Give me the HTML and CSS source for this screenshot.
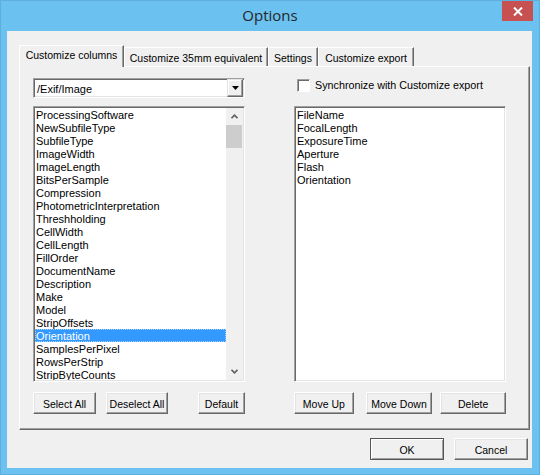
FILE: index.html
```html
<!DOCTYPE html>
<html lang="en">
<head>
  <meta charset="UTF-8">
  <title>Options</title>
  <link rel="stylesheet" href="styles.css">
</head>
<body>

  <div class="window">
    <!-- Title bar -->
    <div class="titlebar">
      <span></span>
      <span class="title">Options</span>
      <button class="close-btn">
        <svg width="10" height="9" viewBox="0 0 10 9"><path d="M1 0.5 L9 8.5 M9 0.5 L1 8.5" stroke="#fff" stroke-width="2"/></svg>
      </button>
    </div>

    <div class="client">
      <!-- Tabs -->
      <div class="tabs">
        <div class="tab active tab-columns">Customize columns</div>
        <div class="tab tab-35mm">Customize 35mm equivalent</div>
        <div class="tab tab-settings">Settings</div>
        <div class="tab tab-export">Customize export</div>
      </div>

      <div class="panel">
        <!-- Left: available tags -->
        <div class="col">
          <div class="combo">
            <span class="combo-text">/Exif/Image</span>
            <span class="combo-btn">
              <svg width="7" height="4" viewBox="0 0 7 4"><path d="M0 0 H7 L3.5 4 Z" fill="#000"/></svg>
            </span>
          </div>

          <div class="listbox">
            <div class="items">
              <div class="item">ProcessingSoftware</div>
              <div class="item">NewSubfileType</div>
              <div class="item">SubfileType</div>
              <div class="item">ImageWidth</div>
              <div class="item">ImageLength</div>
              <div class="item">BitsPerSample</div>
              <div class="item">Compression</div>
              <div class="item">PhotometricInterpretation</div>
              <div class="item">Threshholding</div>
              <div class="item">CellWidth</div>
              <div class="item">CellLength</div>
              <div class="item">FillOrder</div>
              <div class="item">DocumentName</div>
              <div class="item">Description</div>
              <div class="item">Make</div>
              <div class="item">Model</div>
              <div class="item">StripOffsets</div>
              <div class="item selected">Orientation</div>
              <div class="item">SamplesPerPixel</div>
              <div class="item">RowsPerStrip</div>
              <div class="item">StripByteCounts</div>
            </div>
            <div class="scrollbar">
              <span class="arrow">
                <svg width="7" height="5" viewBox="0 0 7 5"><path d="M0.5 4.2 L3.5 1.2 L6.5 4.2" fill="none" stroke="#606060" stroke-width="1.6"/></svg>
              </span>
              <span class="thumb"></span>
              <span class="track"></span>
              <span class="arrow">
                <svg width="7" height="5" viewBox="0 0 7 5"><path d="M0.5 0.8 L3.5 3.8 L6.5 0.8" fill="none" stroke="#606060" stroke-width="1.6"/></svg>
              </span>
            </div>
          </div>

          <div class="btn-row">
            <button class="btn w-select">Select All</button>
            <button class="btn w-deselect">Deselect All</button>
            <button class="btn w-default push">Default</button>
          </div>
        </div>

        <!-- Right: chosen columns -->
        <div class="col">
          <label class="check-row">
            <span class="checkbox"></span>
            Synchronize with Customize export
          </label>

          <div class="listbox">
            <div class="items">
              <div class="item">FileName</div>
              <div class="item">FocalLength</div>
              <div class="item">ExposureTime</div>
              <div class="item">Aperture</div>
              <div class="item">Flash</div>
              <div class="item">Orientation</div>
            </div>
          </div>

          <div class="btn-row">
            <button class="btn w-up">Move Up</button>
            <button class="btn w-down">Move Down</button>
            <button class="btn w-delete">Delete</button>
          </div>
        </div>
      </div>

      <div class="footer">
        <button class="btn w-ok default">OK</button>
        <button class="btn w-cancel">Cancel</button>
      </div>
    </div>
  </div>

</body>
</html>
```
FILE: styles.css
```css
body {
  margin: 0;
  background-color: #6bc1f0;
}
.window {
  width: 540px;
  height: 475px;
  background-color: #6bc1f0;
  box-shadow: inset 0 0 0 1px #5eaede;
  font-family: "Liberation Sans", Arial, sans-serif;
  font-size: 10.5px;
  color: #000;
  overflow: hidden;
}
.titlebar {
  height: 31px;
  display: grid;
  grid-template-columns: 1fr auto 1fr;
  align-items: start;
}
.title {
  font-family: "Open Sans", sans-serif;
  font-size: 15px;
  color: #262626;
  line-height: 31px;
}
.close-btn {
  justify-self: end;
  width: 31px;
  height: 20px;
  margin: 1px 7px 0 0;
  padding: 0;
  border: none;
  background-color: #c75050;
  display: flex;
  align-items: center;
  justify-content: center;
}
.client {
  width: 525px;
  height: 437px;
  margin-left: 7px;
  background-color: #f0f0f0;
  display: flex;
  flex-direction: column;
}

/* tab strip */
.tabs {
  display: flex;
  align-items: flex-end;
  height: 21px;
  margin: 14px 0 0 12px;
  position: relative;
  z-index: 1;
}
.tab {
  box-sizing: border-box;
  height: 19px;
  line-height: 20px;
  text-align: center;
  border-top: 1px solid #fff;
  border-left: 1px solid #fff;
  border-right: 1px solid #696969;
  box-shadow: inset -1px 0 #a0a0a0;
  white-space: nowrap;
}
.tab.active {
  height: 22px;
  line-height: 18px;
  margin-bottom: -1px;
  background-color: #f0f0f0;
}
.tab-columns { width: 105px; }
.tab-35mm { width: 144px; }
.tab-settings { width: 50px; }
.tab-export { width: 96px; }

/* tab page */
.panel {
  box-sizing: border-box;
  width: 511px;
  height: 364px;
  margin-left: 12px;
  padding: 11px 0 0 13px;
  border-top: 1px solid #fff;
  border-left: 1px solid #fff;
  border-right: 1px solid #696969;
  border-bottom: 1px solid #696969;
  box-shadow: inset -1px -1px #a0a0a0;
  display: grid;
  grid-template-columns: 212px 212px;
  column-gap: 49px;
  align-items: start;
}
.col {
  display: flex;
  flex-direction: column;
}

/* sunken 3D edge used by combo, lists and checkbox */
.combo, .listbox, .checkbox {
  box-sizing: border-box;
  background-color: #fff;
  border: 1px solid;
  border-color: #a0a0a0 #fff #fff #a0a0a0;
  box-shadow: inset 1px 1px #696969, inset -1px -1px #e3e3e3;
}
.combo {
  height: 20px;
  display: flex;
  align-items: center;
  padding: 1px;
  margin-bottom: 8px;
}
.combo-text {
  flex: 1;
  padding: 1px 0 0 2px;
  font-size: 11px;
}
.combo-btn {
  box-sizing: border-box;
  width: 16px;
  height: 18px;
  background-color: #f0f0f0;
  border: 1px solid;
  border-color: #e3e3e3 #696969 #696969 #e3e3e3;
  box-shadow: inset -1px -1px #a0a0a0, inset 1px 1px #fff;
  display: flex;
  align-items: center;
  justify-content: center;
}
.listbox {
  height: 276px;
  padding: 1px;
  display: flex;
  overflow: hidden;
}
.items {
  flex: 1;
  overflow: hidden;
  font-size: 11px;
  line-height: 15px;
}
.item {
  height: 13px;
  padding-left: 1px;
  white-space: nowrap;
}
.item.selected {
  background-color: #3399ff;
  color: #fff;
  outline: 1px dotted #a6cfff;
  outline-offset: -1px;
}
.scrollbar {
  width: 17px;
  display: flex;
  flex-direction: column;
  background-color: #f0f0f0;
}
.scrollbar .arrow {
  height: 17px;
  display: flex;
  align-items: center;
  justify-content: center;
}
.scrollbar .thumb {
  height: 23px;
  margin-right: 1px;
  background-color: #cdcdcd;
}
.scrollbar .track {
  flex: 1;
}

.check-row {
  height: 20px;
  display: flex;
  align-items: center;
  padding-left: 3px;
  margin-bottom: 8px;
  margin-top: -3px;
  font-size: 10.75px;
  white-space: nowrap;
}
.checkbox {
  width: 13px;
  height: 13px;
  margin-right: 5px;
  box-shadow: inset 1px 1px #696969;
  border-color: #a0a0a0 #fff #fff #a0a0a0;
}
.check-row + .listbox {
  margin-top: 3px;
}

/* push buttons */
.btn {
  box-sizing: border-box;
  height: 22px;
  padding: 1px 0 0;
  font-family: inherit;
  font-size: 10.5px;
  color: #000;
  background-color: #f0f0f0;
  border: 1px solid;
  border-color: #fff #696969 #696969 #fff;
  box-shadow: inset -1px -1px #a0a0a0, inset 1px 1px #e3e3e3;
}
.btn.default {
  border-color: #555;
  box-shadow: inset 1px 1px #fff, inset -1px -1px #a0a0a0;
}
.btn-row {
  display: flex;
  margin-top: 10px;
}
.w-select { width: 63px; }
.w-deselect { width: 62px; margin-left: 10px; }
.w-default { width: 47px; }
.push { margin-left: auto; }
.w-up { width: 60px; }
.w-down { width: 67px; margin-left: 12px; }
.w-delete { width: 66px; margin-left: 8px; }

.footer {
  display: flex;
  justify-content: flex-end;
  gap: 10px;
  margin: 8px 4px 0 0;
}
.w-ok, .w-cancel {
  width: 74px;
}
```
